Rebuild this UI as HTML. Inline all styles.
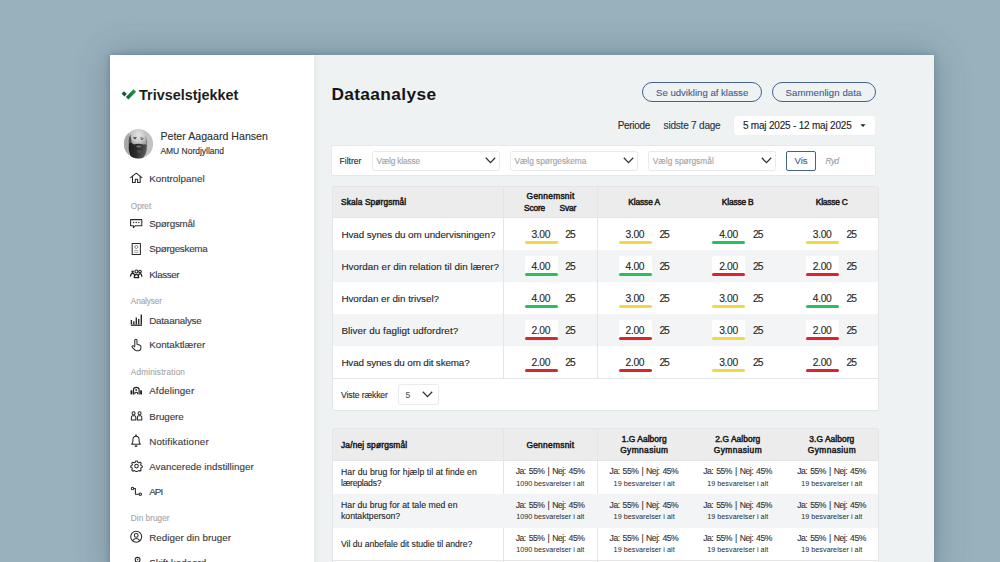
<!DOCTYPE html>
<html><head><meta charset="utf-8"><style>
html,body{margin:0;padding:0;}
body{width:1000px;height:562px;overflow:hidden;position:relative;background:#98b1bd;font-family:"Liberation Sans",sans-serif;}
.t{position:absolute;white-space:nowrap;}
.r{-webkit-text-stroke:0.12px currentColor;}
.sb{-webkit-text-stroke:0.5px currentColor;}
svg{overflow:visible;}
</style></head><body>
<div style="position:absolute;left:110px;top:55px;width:824px;height:520px;background:#eef2f3;box-shadow:0 0 6px rgba(40,60,75,0.25),0 0 34px rgba(40,60,75,0.3);"></div>
<div style="position:absolute;left:110px;top:55px;width:204px;height:520px;background:#ffffff;box-shadow:1px 0 6px rgba(0,0,0,0.06);"></div>
<div style="position:absolute;left:930px;top:55px;width:4px;height:520px;background:#f1f1ee;"></div>
<svg style="position:absolute;left:0;top:0" width="1000" height="562" viewBox="0 0 1000 562"><defs><linearGradient id="lg" x1="0" y1="1" x2="1" y2="0"><stop offset="0" stop-color="#145a36"/><stop offset="1" stop-color="#22a04e"/></linearGradient></defs><path d="M121.6 93.6 L124 91.2 L126.8 94 L124.4 96.4 Z" fill="#16583a"/><path d="M125.9 97.0 L133.5 89.3 L136.1 91.8 L128.4 99.6 Z" fill="url(#lg)"/></svg>
<div class="t" style="left:139.00px;top:87.61px;font-size:14.40px;line-height:14.40px;color:#1e1e1e;font-weight:bold;letter-spacing:0.015px;">Trivselstjekket</div>
<svg style="position:absolute;left:0;top:0" width="1000" height="562" viewBox="0 0 1000 562"><defs><clipPath id="av"><circle cx="138.5" cy="143.9" r="14.6"/></clipPath><filter id="bl" x="-50%" y="-50%" width="200%" height="200%"><feGaussianBlur stdDeviation="0.55"/></filter><radialGradient id="hd" cx="0.5" cy="0.35" r="0.6"><stop offset="0" stop-color="#e4e4e4"/><stop offset="0.7" stop-color="#c9c9c9"/><stop offset="1" stop-color="#a5a5a5"/></radialGradient><linearGradient id="bd" x1="0" y1="0" x2="1" y2="0.3"><stop offset="0" stop-color="#1c1c1c"/><stop offset="0.6" stop-color="#2e2e2e"/><stop offset="1" stop-color="#5a5a5a"/></linearGradient></defs><g clip-path="url(#av)"><rect x="120" y="125" width="40" height="40" fill="#c2c2c2"/><rect x="120" y="125" width="9" height="40" fill="#a8a8a8"/><g filter="url(#bl)"><path d="M131.5 138 Q131 129.5 138.5 129.3 Q145.5 129.5 145.6 137 L146 146 L131 146 Z" fill="url(#hd)"/><path d="M130.3 134 Q131.3 141 132.5 147 L129.6 149 Q127.5 141 130.3 134 Z" fill="#4a4a4a"/><path d="M144.6 135 Q146.6 139 145.8 146 L147 147 Q148 140 144.6 135 Z" fill="#888"/><path d="M133.2 137.6 L136.6 137.4 M140.4 137.8 L143.6 138.4" stroke="#505050" stroke-width="0.9"/><ellipse cx="135" cy="138.6" rx="1" ry="0.55" fill="#333"/><ellipse cx="141.8" cy="139.2" rx="1" ry="0.55" fill="#444"/><path d="M129 143.5 Q131.5 142 134 144.5 Q138.5 143.2 143 144.6 Q145.5 143.5 146.8 145.5 Q147.5 155 141 159.5 Q135 160.5 131.5 158 Q127.8 152 129 143.5 Z" fill="url(#bd)"/><ellipse cx="138.8" cy="146.6" rx="2.6" ry="1" fill="#777"/><ellipse cx="139.5" cy="151.5" rx="2.6" ry="2" fill="#4a4a4a"/></g></g></svg>
<div class="t r" style="left:160.40px;top:131.03px;font-size:10.60px;line-height:10.60px;color:#2f2f2f;letter-spacing:0.017px;">Peter Aagaard Hansen</div>
<div class="t r" style="left:160.40px;top:147.40px;font-size:8.50px;line-height:8.50px;color:#2f2f2f;letter-spacing:-0.014px;">AMU Nordjylland</div>
<div class="t r" style="left:130.80px;top:202.56px;font-size:8.20px;line-height:8.20px;color:#a6a6a6;letter-spacing:-0.025px;">Opret</div>
<div class="t r" style="left:130.80px;top:298.26px;font-size:8.20px;line-height:8.20px;color:#a6a6a6;letter-spacing:-0.085px;">Analyser</div>
<div class="t r" style="left:130.80px;top:369.26px;font-size:8.20px;line-height:8.20px;color:#a6a6a6;letter-spacing:0.173px;">Administration</div>
<div class="t r" style="left:130.80px;top:515.26px;font-size:8.20px;line-height:8.20px;color:#a6a6a6;letter-spacing:0.056px;">Din bruger</div>
<svg style="position:absolute;left:0;top:0" width="1000" height="562" viewBox="0 0 1000 562">
<path d="M130.6 177.6 L136.3 173.2 L141.9 177.6" fill="none" stroke="#2a2a2a" stroke-width="1.05" stroke-linecap="round" stroke-linejoin="round"/>
<path d="M132.5 176.2 V182.4 H135.3 V179.3 H137.6 V182.4 H140.2 V176.2" fill="none" stroke="#2a2a2a" stroke-width="1.05" stroke-linecap="round" stroke-linejoin="round"/>
<path d="M130.6 219.6 H141.8 V225.8 H135.2 L133.4 227.6 V225.8 H130.6 Z" fill="none" stroke="#2a2a2a" stroke-width="1.05" stroke-linecap="round" stroke-linejoin="round"/>
<circle cx="133.6" cy="222.6" r="0.75" fill="#2a2a2a"/><circle cx="136.2" cy="222.6" r="0.75" fill="#2a2a2a"/><circle cx="138.8" cy="222.6" r="0.75" fill="#2a2a2a"/>
<rect x="132.2" y="243.4" width="8.2" height="11.2" fill="none" stroke="#2a2a2a" stroke-width="1.05" stroke-linecap="round" stroke-linejoin="round"/>
<circle cx="136.3" cy="247" r="1.5" fill="none" stroke="#777" stroke-width="0.9"/>
<path d="M134.2 250.6 H138.4 M134.2 252.4 H138.4" fill="none" stroke="#999" stroke-width="0.9"/>
<circle cx="132.6" cy="271.8" r="1.2" fill="#222"/><circle cx="136.4" cy="271.5" r="1.5" fill="none" stroke="#222" stroke-width="1.1"/><circle cx="140" cy="271.6" r="1.3" fill="none" stroke="#222" stroke-width="1.1"/>
<path d="M130.4 276.6 Q130.8 273.4 132.8 273.4 Q134.4 273.4 134.6 275.8 M134.2 277.6 Q134.4 274.4 136.4 274.4 Q138.5 274.4 138.7 277.6 Z M138.4 275.8 Q138.6 273.6 140.2 273.6 Q141.6 273.6 141.9 276.8" fill="none" stroke="#222" stroke-width="1.2" stroke-linejoin="round"/>
<path d="M130.9 325.2 H142" fill="none" stroke="#2a2a2a" stroke-width="1.3"/>
<path d="M131.4 324.4 V320 M133.8 324.4 V321.2 M136.3 324.4 V317.4 M138.7 324.4 V319 M141.3 324.4 V314.4" fill="none" stroke="#2a2a2a" stroke-width="1.4"/>
<path d="M134.8 345.6 V340.6 Q134.8 339.2 135.9 339.2 Q137 339.2 137 340.6 V344.2 L139.6 345 Q141.2 345.6 141 347.4 L140.6 349 Q140.2 350.7 138.6 350.7 H136.6 Q135.6 350.7 134.9 349.9 L132.3 347.4 Q131.6 346.5 132.4 345.9 Q133.2 345.4 134 346.1 L134.8 346.8" fill="none" stroke="#2a2a2a" stroke-width="1.05" stroke-linecap="round" stroke-linejoin="round"/>
<rect x="130.5" y="390.2" width="1.9" height="4.3" rx="0.6" fill="#222"/><rect x="140.1" y="390.2" width="1.9" height="4.3" rx="0.6" fill="#222"/>
<path d="M133.5 394.4 V389.8 Q133.5 387.3 136.3 387.3 Q139.1 387.3 139.1 389.8 V394.4" fill="none" stroke="#222" stroke-width="1.2"/>
<circle cx="136.2" cy="389.9" r="0.9" fill="#222"/><path d="M134.9 394.3 V392.4 H137.5 V394.3" fill="none" stroke="#222" stroke-width="1"/>
<circle cx="133.6" cy="413.3" r="1.5" fill="none" stroke="#2a2a2a" stroke-width="1.05" stroke-linecap="round" stroke-linejoin="round"/><circle cx="139.6" cy="413.3" r="1.5" fill="none" stroke="#2a2a2a" stroke-width="1.05" stroke-linecap="round" stroke-linejoin="round"/>
<path d="M131.4 420 V417.2 Q131.4 415.8 132.8 415.8 H134.4 Q135.8 415.8 135.8 417.2 V420 Z M137.4 420 V417.2 Q137.4 415.8 138.8 415.8 H140.4 Q141.8 415.8 141.8 417.2 V420 Z" fill="none" stroke="#2a2a2a" stroke-width="1.05" stroke-linecap="round" stroke-linejoin="round"/>
<path d="M131.6 444.3 Q132.9 443.4 132.9 441 V439.6 Q132.9 436.3 136 436.3 Q139.1 436.3 139.1 439.6 V441 Q139.1 443.4 140.4 444.3 Z" fill="none" stroke="#2a2a2a" stroke-width="1.05" stroke-linecap="round" stroke-linejoin="round"/>
<path d="M136 434.6 V436.2" fill="none" stroke="#222" stroke-width="1.4"/><path d="M134.8 445.6 Q136 447 137.2 445.6" fill="none" stroke="#222" stroke-width="1.3"/>
<circle cx="136.5" cy="466.1" r="1.8" fill="none" stroke="#2a2a2a" stroke-width="1.05" stroke-linecap="round" stroke-linejoin="round"/>
<path d="M135.7 460.9 H137.3 L137.7 462.2 L138.9 462.8 L140.1 462.1 L141.2 463.2 L140.6 464.4 L141.1 465.5 L142.2 465.9 V467.4 L141.1 467.8 L140.6 468.9 L141.2 470.1 L140.1 471.2 L138.9 470.5 L137.7 471.1 L137.3 471.4 H135.7 L135.3 471.1 L134.1 470.5 L132.9 471.2 L131.8 470.1 L132.4 468.9 L131.9 467.8 L130.8 467.4 V465.9 L131.9 465.5 L132.4 464.4 L131.8 463.2 L132.9 462.1 L134.1 462.8 L135.3 462.2 Z" fill="none" stroke="#2a2a2a" stroke-width="1.05" stroke-linecap="round" stroke-linejoin="round"/>
<circle cx="132.5" cy="488.5" r="1.25" fill="none" stroke="#2a2a2a" stroke-width="1.05" stroke-linecap="round" stroke-linejoin="round"/><circle cx="140.3" cy="494.2" r="1.25" fill="none" stroke="#2a2a2a" stroke-width="1.05" stroke-linecap="round" stroke-linejoin="round"/>
<path d="M133.8 488.5 H135.4 V494.2 H139" fill="none" stroke="#2a2a2a" stroke-width="1.05" stroke-linecap="round" stroke-linejoin="round"/>
<circle cx="136.2" cy="536.8" r="5.5" fill="none" stroke="#2a2a2a" stroke-width="1.05" stroke-linecap="round" stroke-linejoin="round"/><circle cx="136.2" cy="535.4" r="1.9" fill="none" stroke="#2a2a2a" stroke-width="1.05" stroke-linecap="round" stroke-linejoin="round"/>
<path d="M132.6 540.8 Q133.6 538.4 136.2 538.4 Q138.8 538.4 139.8 540.8" fill="none" stroke="#2a2a2a" stroke-width="1.05" stroke-linecap="round" stroke-linejoin="round"/>
<circle cx="137.6" cy="559.8" r="2.4" fill="none" stroke="#2a2a2a" stroke-width="1.05" stroke-linecap="round" stroke-linejoin="round"/><circle cx="137.6" cy="559.8" r="0.7" fill="#222"/>
</svg>
<div class="t r" style="left:149.20px;top:174.00px;font-size:9.80px;line-height:9.80px;color:#3a3a3a;letter-spacing:0.043px;">Kontrolpanel</div>
<div class="t r" style="left:149.20px;top:219.40px;font-size:9.80px;line-height:9.80px;color:#3a3a3a;letter-spacing:-0.198px;">Spørgsmål</div>
<div class="t r" style="left:149.20px;top:244.20px;font-size:9.80px;line-height:9.80px;color:#3a3a3a;letter-spacing:-0.245px;">Spørgeskema</div>
<div class="t r" style="left:149.20px;top:269.50px;font-size:9.80px;line-height:9.80px;color:#3a3a3a;letter-spacing:-0.381px;">Klasser</div>
<div class="t r" style="left:149.20px;top:315.70px;font-size:9.80px;line-height:9.80px;color:#3a3a3a;letter-spacing:-0.189px;">Dataanalyse</div>
<div class="t r" style="left:149.20px;top:340.30px;font-size:9.80px;line-height:9.80px;color:#3a3a3a;letter-spacing:-0.010px;">Kontaktlærer</div>
<div class="t r" style="left:149.20px;top:386.30px;font-size:9.80px;line-height:9.80px;color:#3a3a3a;letter-spacing:0.095px;">Afdelinger</div>
<div class="t r" style="left:149.20px;top:411.60px;font-size:9.80px;line-height:9.80px;color:#3a3a3a;letter-spacing:-0.048px;">Brugere</div>
<div class="t r" style="left:149.20px;top:436.60px;font-size:9.80px;line-height:9.80px;color:#3a3a3a;letter-spacing:0.178px;">Notifikationer</div>
<div class="t r" style="left:149.20px;top:461.90px;font-size:9.80px;line-height:9.80px;color:#3a3a3a;letter-spacing:0.027px;">Avancerede indstillinger</div>
<div class="t r" style="left:149.20px;top:487.00px;font-size:9.80px;line-height:9.80px;color:#3a3a3a;letter-spacing:-0.889px;">API</div>
<div class="t r" style="left:149.20px;top:532.60px;font-size:9.80px;line-height:9.80px;color:#3a3a3a;letter-spacing:0.042px;">Rediger din bruger</div>
<div class="t r" style="left:149.20px;top:558.00px;font-size:9.80px;line-height:9.80px;color:#3a3a3a;letter-spacing:-0.015px;">Skift kodeord</div>
<div class="t" style="left:331.40px;top:85.96px;font-size:17.30px;line-height:17.30px;color:#151515;font-weight:bold;letter-spacing:0.375px;">Dataanalyse</div>
<div style="position:absolute;left:642px;top:82px;width:120px;height:20px;border:1.5px solid #44608e;border-radius:11px;box-sizing:border-box;"></div>
<div style="position:absolute;left:771.5px;top:82px;width:104px;height:20px;border:1.5px solid #44608e;border-radius:11px;box-sizing:border-box;"></div>
<div class="t r" style="left:656.00px;top:87.87px;font-size:9.60px;line-height:9.60px;color:#44608e;letter-spacing:-0.000px;">Se udvikling af klasse</div>
<div class="t r" style="left:785.50px;top:87.87px;font-size:9.60px;line-height:9.60px;color:#44608e;letter-spacing:0.083px;">Sammenlign data</div>
<div class="t r" style="left:617.70px;top:120.84px;font-size:10.00px;line-height:10.00px;color:#2a2a2a;letter-spacing:-0.308px;">Periode</div>
<div class="t r" style="left:663.60px;top:120.84px;font-size:10.00px;line-height:10.00px;color:#2b3445;letter-spacing:-0.200px;">sidste 7 dage</div>
<div style="position:absolute;left:734px;top:115.5px;width:140.5px;height:19.5px;background:#fff;border-radius:2px;box-shadow:0 0 1px rgba(0,0,0,0.08);"></div>
<div class="t r" style="left:742.90px;top:120.84px;font-size:10.00px;line-height:10.00px;color:#222;letter-spacing:-0.200px;">5 maj 2025 - 12 maj 2025</div>
<svg style="position:absolute;left:859.8px;top:123.6px" width="6" height="3.4" viewBox="0 0 6 3.4"><path d="M0.4 0.2 H5.6 L3 3.1 Z" fill="#222"/></svg>
<div style="position:absolute;left:330.7px;top:144.8px;width:545px;height:31.4px;background:#fff;border-radius:2px;border:1px solid #e6e9ea;box-sizing:border-box;"></div>
<div class="t r" style="left:339.60px;top:156.72px;font-size:8.60px;line-height:8.60px;color:#2a2a2a;letter-spacing:-0.029px;">Filtrer</div>
<div style="position:absolute;left:371.6px;top:150.5px;width:128.0px;height:20px;border:1px solid #e8eaeb;border-radius:2.5px;box-sizing:border-box;background:#fff;"></div>
<div class="t r" style="left:376.40px;top:156.97px;font-size:8.30px;line-height:8.30px;color:#a2a2a2;letter-spacing:-0.159px;">Vælg klasse</div>
<svg style="position:absolute;left:485.1px;top:157px" width="11" height="7" viewBox="0 0 11 7"><path d="M0.8 0.8 L5.5 5.6 L10.2 0.8" fill="none" stroke="#333" stroke-width="1.3"/></svg>
<div style="position:absolute;left:509.6px;top:150.5px;width:128.0px;height:20px;border:1px solid #e8eaeb;border-radius:2.5px;box-sizing:border-box;background:#fff;"></div>
<div class="t r" style="left:514.40px;top:156.97px;font-size:8.30px;line-height:8.30px;color:#a2a2a2;letter-spacing:-0.000px;">Vælg spørgeskema</div>
<svg style="position:absolute;left:623.1px;top:157px" width="11" height="7" viewBox="0 0 11 7"><path d="M0.8 0.8 L5.5 5.6 L10.2 0.8" fill="none" stroke="#333" stroke-width="1.3"/></svg>
<div style="position:absolute;left:648px;top:150.5px;width:127.60000000000002px;height:20px;border:1px solid #e8eaeb;border-radius:2.5px;box-sizing:border-box;background:#fff;"></div>
<div class="t r" style="left:652.80px;top:156.97px;font-size:8.30px;line-height:8.30px;color:#a2a2a2;letter-spacing:0.044px;">Vælg spørgsmål</div>
<svg style="position:absolute;left:761.1px;top:157px" width="11" height="7" viewBox="0 0 11 7"><path d="M0.8 0.8 L5.5 5.6 L10.2 0.8" fill="none" stroke="#333" stroke-width="1.3"/></svg>
<div style="position:absolute;left:785.5px;top:151px;width:30.5px;height:19.8px;border:1.3px solid #44608e;border-radius:2px;box-sizing:border-box;"></div>
<div class="t r" style="left:794.60px;top:155.87px;font-size:9.60px;line-height:9.60px;color:#44608e;letter-spacing:-0.126px;">Vis</div>
<div class="t r" style="left:825.60px;top:157.56px;font-size:8.20px;line-height:8.20px;color:#9d9d9d;font-style:italic;letter-spacing:-0.600px;">Ryd</div>
<div style="position:absolute;left:332.4px;top:186.3px;width:546.6px;height:224.7px;background:#fff;border:1px solid #e3e5e6;box-sizing:border-box;border-radius:2px;"></div>
<div style="position:absolute;left:333.4px;top:187.3px;width:544.6px;height:30.3px;background:#ececec;"></div>
<div style="position:absolute;left:333.4px;top:217.3px;width:544.6px;height:1px;background:#e3e5e6;"></div>
<div class="t r" style="left:341.40px;top:229.72px;font-size:9.90px;line-height:9.90px;color:#262626;letter-spacing:-0.097px;">Hvad synes du om undervisningen?</div>
<div style="position:absolute;left:524.6px;top:224.10000000000002px;width:33px;height:20.2px;background:#fff;border-radius:2px;"></div>
<div style="position:absolute;left:524.6px;top:241.4px;width:33px;height:3px;background:#f4d843;border-radius:1.5px;"></div>
<div class="t r" style="left:531.40px;top:229.98px;font-size:10.30px;line-height:10.30px;color:#262626;letter-spacing:-0.345px;">3.00</div>
<div class="t r" style="left:565.20px;top:229.98px;font-size:10.30px;line-height:10.30px;color:#262626;letter-spacing:-1.033px;">25</div>
<div style="position:absolute;left:618.8px;top:224.10000000000002px;width:33px;height:20.2px;background:#fff;border-radius:2px;"></div>
<div style="position:absolute;left:618.8px;top:241.4px;width:33px;height:3px;background:#f4d843;border-radius:1.5px;"></div>
<div class="t r" style="left:625.60px;top:229.98px;font-size:10.30px;line-height:10.30px;color:#262626;letter-spacing:-0.345px;">3.00</div>
<div class="t r" style="left:659.40px;top:229.98px;font-size:10.30px;line-height:10.30px;color:#262626;letter-spacing:-1.033px;">25</div>
<div style="position:absolute;left:712.4px;top:224.10000000000002px;width:33px;height:20.2px;background:#fff;border-radius:2px;"></div>
<div style="position:absolute;left:712.4px;top:241.4px;width:33px;height:3px;background:#22c35c;border-radius:1.5px;"></div>
<div class="t r" style="left:719.20px;top:229.98px;font-size:10.30px;line-height:10.30px;color:#262626;letter-spacing:-0.345px;">4.00</div>
<div class="t r" style="left:753.00px;top:229.98px;font-size:10.30px;line-height:10.30px;color:#262626;letter-spacing:-1.033px;">25</div>
<div style="position:absolute;left:806.0px;top:224.10000000000002px;width:33px;height:20.2px;background:#fff;border-radius:2px;"></div>
<div style="position:absolute;left:806.0px;top:241.4px;width:33px;height:3px;background:#f4d843;border-radius:1.5px;"></div>
<div class="t r" style="left:812.80px;top:229.98px;font-size:10.30px;line-height:10.30px;color:#262626;letter-spacing:-0.345px;">3.00</div>
<div class="t r" style="left:846.60px;top:229.98px;font-size:10.30px;line-height:10.30px;color:#262626;letter-spacing:-1.033px;">25</div>
<div style="position:absolute;left:333.4px;top:250.3px;width:544.6px;height:32px;background:#f2f4f5;"></div>
<div class="t r" style="left:341.40px;top:261.72px;font-size:9.90px;line-height:9.90px;color:#262626;letter-spacing:0.020px;">Hvordan er din relation til din lærer?</div>
<div style="position:absolute;left:524.6px;top:256.1px;width:33px;height:20.2px;background:#fff;border-radius:2px;"></div>
<div style="position:absolute;left:524.6px;top:273.40000000000003px;width:33px;height:3px;background:#22c35c;border-radius:1.5px;"></div>
<div class="t r" style="left:531.40px;top:261.98px;font-size:10.30px;line-height:10.30px;color:#262626;letter-spacing:-0.345px;">4.00</div>
<div class="t r" style="left:565.20px;top:261.98px;font-size:10.30px;line-height:10.30px;color:#262626;letter-spacing:-1.033px;">25</div>
<div style="position:absolute;left:618.8px;top:256.1px;width:33px;height:20.2px;background:#fff;border-radius:2px;"></div>
<div style="position:absolute;left:618.8px;top:273.40000000000003px;width:33px;height:3px;background:#22c35c;border-radius:1.5px;"></div>
<div class="t r" style="left:625.60px;top:261.98px;font-size:10.30px;line-height:10.30px;color:#262626;letter-spacing:-0.345px;">4.00</div>
<div class="t r" style="left:659.40px;top:261.98px;font-size:10.30px;line-height:10.30px;color:#262626;letter-spacing:-1.033px;">25</div>
<div style="position:absolute;left:712.4px;top:256.1px;width:33px;height:20.2px;background:#fff;border-radius:2px;"></div>
<div style="position:absolute;left:712.4px;top:273.40000000000003px;width:33px;height:3px;background:#d8262c;border-radius:1.5px;"></div>
<div class="t r" style="left:719.20px;top:261.98px;font-size:10.30px;line-height:10.30px;color:#262626;letter-spacing:-0.345px;">2.00</div>
<div class="t r" style="left:753.00px;top:261.98px;font-size:10.30px;line-height:10.30px;color:#262626;letter-spacing:-1.033px;">25</div>
<div style="position:absolute;left:806.0px;top:256.1px;width:33px;height:20.2px;background:#fff;border-radius:2px;"></div>
<div style="position:absolute;left:806.0px;top:273.40000000000003px;width:33px;height:3px;background:#d8262c;border-radius:1.5px;"></div>
<div class="t r" style="left:812.80px;top:261.98px;font-size:10.30px;line-height:10.30px;color:#262626;letter-spacing:-0.345px;">2.00</div>
<div class="t r" style="left:846.60px;top:261.98px;font-size:10.30px;line-height:10.30px;color:#262626;letter-spacing:-1.033px;">25</div>
<div class="t r" style="left:341.40px;top:293.72px;font-size:9.90px;line-height:9.90px;color:#262626;letter-spacing:-0.052px;">Hvordan er din trivsel?</div>
<div style="position:absolute;left:524.6px;top:288.1px;width:33px;height:20.2px;background:#fff;border-radius:2px;"></div>
<div style="position:absolute;left:524.6px;top:305.40000000000003px;width:33px;height:3px;background:#22c35c;border-radius:1.5px;"></div>
<div class="t r" style="left:531.40px;top:293.98px;font-size:10.30px;line-height:10.30px;color:#262626;letter-spacing:-0.345px;">4.00</div>
<div class="t r" style="left:565.20px;top:293.98px;font-size:10.30px;line-height:10.30px;color:#262626;letter-spacing:-1.033px;">25</div>
<div style="position:absolute;left:618.8px;top:288.1px;width:33px;height:20.2px;background:#fff;border-radius:2px;"></div>
<div style="position:absolute;left:618.8px;top:305.40000000000003px;width:33px;height:3px;background:#f4d843;border-radius:1.5px;"></div>
<div class="t r" style="left:625.60px;top:293.98px;font-size:10.30px;line-height:10.30px;color:#262626;letter-spacing:-0.345px;">3.00</div>
<div class="t r" style="left:659.40px;top:293.98px;font-size:10.30px;line-height:10.30px;color:#262626;letter-spacing:-1.033px;">25</div>
<div style="position:absolute;left:712.4px;top:288.1px;width:33px;height:20.2px;background:#fff;border-radius:2px;"></div>
<div style="position:absolute;left:712.4px;top:305.40000000000003px;width:33px;height:3px;background:#f4d843;border-radius:1.5px;"></div>
<div class="t r" style="left:719.20px;top:293.98px;font-size:10.30px;line-height:10.30px;color:#262626;letter-spacing:-0.345px;">3.00</div>
<div class="t r" style="left:753.00px;top:293.98px;font-size:10.30px;line-height:10.30px;color:#262626;letter-spacing:-1.033px;">25</div>
<div style="position:absolute;left:806.0px;top:288.1px;width:33px;height:20.2px;background:#fff;border-radius:2px;"></div>
<div style="position:absolute;left:806.0px;top:305.40000000000003px;width:33px;height:3px;background:#22c35c;border-radius:1.5px;"></div>
<div class="t r" style="left:812.80px;top:293.98px;font-size:10.30px;line-height:10.30px;color:#262626;letter-spacing:-0.345px;">4.00</div>
<div class="t r" style="left:846.60px;top:293.98px;font-size:10.30px;line-height:10.30px;color:#262626;letter-spacing:-1.033px;">25</div>
<div style="position:absolute;left:333.4px;top:314.3px;width:544.6px;height:32px;background:#f2f4f5;"></div>
<div class="t r" style="left:341.40px;top:325.72px;font-size:9.90px;line-height:9.90px;color:#262626;letter-spacing:0.056px;">Bliver du fagligt udfordret?</div>
<div style="position:absolute;left:524.6px;top:320.1px;width:33px;height:20.2px;background:#fff;border-radius:2px;"></div>
<div style="position:absolute;left:524.6px;top:337.40000000000003px;width:33px;height:3px;background:#d8262c;border-radius:1.5px;"></div>
<div class="t r" style="left:531.40px;top:325.98px;font-size:10.30px;line-height:10.30px;color:#262626;letter-spacing:-0.345px;">2.00</div>
<div class="t r" style="left:565.20px;top:325.98px;font-size:10.30px;line-height:10.30px;color:#262626;letter-spacing:-1.033px;">25</div>
<div style="position:absolute;left:618.8px;top:320.1px;width:33px;height:20.2px;background:#fff;border-radius:2px;"></div>
<div style="position:absolute;left:618.8px;top:337.40000000000003px;width:33px;height:3px;background:#d8262c;border-radius:1.5px;"></div>
<div class="t r" style="left:625.60px;top:325.98px;font-size:10.30px;line-height:10.30px;color:#262626;letter-spacing:-0.345px;">2.00</div>
<div class="t r" style="left:659.40px;top:325.98px;font-size:10.30px;line-height:10.30px;color:#262626;letter-spacing:-1.033px;">25</div>
<div style="position:absolute;left:712.4px;top:320.1px;width:33px;height:20.2px;background:#fff;border-radius:2px;"></div>
<div style="position:absolute;left:712.4px;top:337.40000000000003px;width:33px;height:3px;background:#f4d843;border-radius:1.5px;"></div>
<div class="t r" style="left:719.20px;top:325.98px;font-size:10.30px;line-height:10.30px;color:#262626;letter-spacing:-0.345px;">3.00</div>
<div class="t r" style="left:753.00px;top:325.98px;font-size:10.30px;line-height:10.30px;color:#262626;letter-spacing:-1.033px;">25</div>
<div style="position:absolute;left:806.0px;top:320.1px;width:33px;height:20.2px;background:#fff;border-radius:2px;"></div>
<div style="position:absolute;left:806.0px;top:337.40000000000003px;width:33px;height:3px;background:#d8262c;border-radius:1.5px;"></div>
<div class="t r" style="left:812.80px;top:325.98px;font-size:10.30px;line-height:10.30px;color:#262626;letter-spacing:-0.345px;">2.00</div>
<div class="t r" style="left:846.60px;top:325.98px;font-size:10.30px;line-height:10.30px;color:#262626;letter-spacing:-1.033px;">25</div>
<div class="t r" style="left:341.40px;top:357.72px;font-size:9.90px;line-height:9.90px;color:#262626;letter-spacing:-0.154px;">Hvad synes du om dit skema?</div>
<div style="position:absolute;left:524.6px;top:352.1px;width:33px;height:20.2px;background:#fff;border-radius:2px;"></div>
<div style="position:absolute;left:524.6px;top:369.40000000000003px;width:33px;height:3px;background:#d8262c;border-radius:1.5px;"></div>
<div class="t r" style="left:531.40px;top:357.98px;font-size:10.30px;line-height:10.30px;color:#262626;letter-spacing:-0.345px;">2.00</div>
<div class="t r" style="left:565.20px;top:357.98px;font-size:10.30px;line-height:10.30px;color:#262626;letter-spacing:-1.033px;">25</div>
<div style="position:absolute;left:618.8px;top:352.1px;width:33px;height:20.2px;background:#fff;border-radius:2px;"></div>
<div style="position:absolute;left:618.8px;top:369.40000000000003px;width:33px;height:3px;background:#d8262c;border-radius:1.5px;"></div>
<div class="t r" style="left:625.60px;top:357.98px;font-size:10.30px;line-height:10.30px;color:#262626;letter-spacing:-0.345px;">2.00</div>
<div class="t r" style="left:659.40px;top:357.98px;font-size:10.30px;line-height:10.30px;color:#262626;letter-spacing:-1.033px;">25</div>
<div style="position:absolute;left:712.4px;top:352.1px;width:33px;height:20.2px;background:#fff;border-radius:2px;"></div>
<div style="position:absolute;left:712.4px;top:369.40000000000003px;width:33px;height:3px;background:#f4d843;border-radius:1.5px;"></div>
<div class="t r" style="left:719.20px;top:357.98px;font-size:10.30px;line-height:10.30px;color:#262626;letter-spacing:-0.345px;">3.00</div>
<div class="t r" style="left:753.00px;top:357.98px;font-size:10.30px;line-height:10.30px;color:#262626;letter-spacing:-1.033px;">25</div>
<div style="position:absolute;left:806.0px;top:352.1px;width:33px;height:20.2px;background:#fff;border-radius:2px;"></div>
<div style="position:absolute;left:806.0px;top:369.40000000000003px;width:33px;height:3px;background:#d8262c;border-radius:1.5px;"></div>
<div class="t r" style="left:812.80px;top:357.98px;font-size:10.30px;line-height:10.30px;color:#262626;letter-spacing:-0.345px;">2.00</div>
<div class="t r" style="left:846.60px;top:357.98px;font-size:10.30px;line-height:10.30px;color:#262626;letter-spacing:-1.033px;">25</div>
<div style="position:absolute;left:503.2px;top:187.3px;width:1px;height:191.0px;background:#e3e5e6;"></div>
<div style="position:absolute;left:597.4px;top:187.3px;width:1px;height:191.0px;background:#e3e5e6;"></div>
<div style="position:absolute;left:333.4px;top:377.8px;width:544.6px;height:1px;background:#e3e5e6;"></div>
<div class="t sb" style="left:341.00px;top:198.29px;font-size:8.40px;line-height:8.40px;color:#1e1e1e;letter-spacing:0.102px;">Skala Spørgsmål</div>
<div class="t sb" style="left:526.60px;top:192.29px;font-size:8.40px;line-height:8.40px;color:#1e1e1e;letter-spacing:0.280px;">Gennemsnit</div>
<div class="t sb" style="left:524.00px;top:203.89px;font-size:8.40px;line-height:8.40px;color:#1e1e1e;letter-spacing:-0.181px;">Score</div>
<div class="t sb" style="left:559.60px;top:203.89px;font-size:8.40px;line-height:8.40px;color:#1e1e1e;letter-spacing:-0.154px;">Svar</div>
<div class="t sb" style="left:628.20px;top:197.89px;font-size:8.40px;line-height:8.40px;color:#1e1e1e;letter-spacing:-0.103px;">Klasse A</div>
<div class="t sb" style="left:721.80px;top:197.89px;font-size:8.40px;line-height:8.40px;color:#1e1e1e;letter-spacing:-0.163px;">Klasse B</div>
<div class="t sb" style="left:815.80px;top:197.89px;font-size:8.40px;line-height:8.40px;color:#1e1e1e;letter-spacing:-0.229px;">Klasse C</div>
<div class="t r" style="left:341.00px;top:390.72px;font-size:8.60px;line-height:8.60px;color:#2a2a2a;letter-spacing:-0.111px;">Viste rækker</div>
<div style="position:absolute;left:398.2px;top:384.4px;width:41.3px;height:20.2px;border:1px solid #e8eaeb;border-radius:2.5px;box-sizing:border-box;background:#fff;"></div>
<div class="t r" style="left:405.60px;top:390.72px;font-size:8.60px;line-height:8.60px;color:#555;">5</div>
<svg style="position:absolute;left:421.5px;top:390.5px" width="11" height="7" viewBox="0 0 11 7"><path d="M0.8 0.8 L5.5 5.6 L10.2 0.8" fill="none" stroke="#333" stroke-width="1.3"/></svg>
<div style="position:absolute;left:332.4px;top:428px;width:546.6px;height:150px;background:#fff;border:1px solid #e3e5e6;box-sizing:border-box;border-radius:2px;"></div>
<div style="position:absolute;left:333.4px;top:429px;width:544.6px;height:31.3px;background:#ececec;"></div>
<div style="position:absolute;left:333.4px;top:460.3px;width:544.6px;height:1px;background:#e3e5e6;"></div>
<div style="position:absolute;left:503.2px;top:429px;width:1px;height:140px;background:#e3e5e6;"></div>
<div style="position:absolute;left:597.4px;top:429px;width:1px;height:140px;background:#e3e5e6;"></div>
<div class="t sb" style="left:341.00px;top:440.69px;font-size:8.40px;line-height:8.40px;color:#1e1e1e;letter-spacing:0.156px;">Ja/nej spørgsmål</div>
<div class="t sb" style="left:526.40px;top:440.69px;font-size:8.40px;line-height:8.40px;color:#1e1e1e;letter-spacing:0.280px;">Gennemsnit</div>
<div class="t sb" style="left:621.70px;top:434.99px;font-size:8.40px;line-height:8.40px;color:#1e1e1e;letter-spacing:0.065px;">1.G Aalborg</div>
<div class="t sb" style="left:620.20px;top:446.39px;font-size:8.40px;line-height:8.40px;color:#1e1e1e;letter-spacing:0.398px;">Gymnasium</div>
<div class="t sb" style="left:715.30px;top:434.99px;font-size:8.40px;line-height:8.40px;color:#1e1e1e;letter-spacing:0.065px;">2.G Aalborg</div>
<div class="t sb" style="left:713.80px;top:446.39px;font-size:8.40px;line-height:8.40px;color:#1e1e1e;letter-spacing:0.398px;">Gymnasium</div>
<div class="t sb" style="left:809.30px;top:434.99px;font-size:8.40px;line-height:8.40px;color:#1e1e1e;letter-spacing:0.065px;">3.G Aalborg</div>
<div class="t sb" style="left:807.80px;top:446.39px;font-size:8.40px;line-height:8.40px;color:#1e1e1e;letter-spacing:0.398px;">Gymnasium</div>
<div class="t r" style="left:341.00px;top:467.84px;font-size:8.70px;line-height:8.70px;color:#262626;letter-spacing:0.056px;">Har du brug for hjælp til at finde en</div>
<div class="t r" style="left:341.00px;top:478.64px;font-size:8.70px;line-height:8.70px;color:#262626;letter-spacing:-0.269px;">læreplads?</div>
<div class="t r" style="left:515.70px;top:467.32px;font-size:8.60px;line-height:8.60px;color:#333;letter-spacing:-0.457px;word-spacing:1.00px;">Ja: 55% | Nej: 45%</div>
<div class="t" style="left:516.20px;top:479.51px;font-size:7.20px;line-height:7.20px;color:#2a2a2a;letter-spacing:-0.011px;">1090 besvarelser i alt</div>
<div class="t r" style="left:609.60px;top:467.32px;font-size:8.60px;line-height:8.60px;color:#333;letter-spacing:-0.457px;word-spacing:1.00px;">Ja: 55% | Nej: 45%</div>
<div class="t" style="left:613.60px;top:479.51px;font-size:7.20px;line-height:7.20px;color:#2a2a2a;letter-spacing:0.040px;">19 besvarelser i alt</div>
<div class="t r" style="left:703.20px;top:467.32px;font-size:8.60px;line-height:8.60px;color:#333;letter-spacing:-0.457px;word-spacing:1.00px;">Ja: 55% | Nej: 45%</div>
<div class="t" style="left:707.20px;top:479.51px;font-size:7.20px;line-height:7.20px;color:#2a2a2a;letter-spacing:0.040px;">19 besvarelser i alt</div>
<div class="t r" style="left:797.20px;top:467.32px;font-size:8.60px;line-height:8.60px;color:#333;letter-spacing:-0.457px;word-spacing:1.00px;">Ja: 55% | Nej: 45%</div>
<div class="t" style="left:801.20px;top:479.51px;font-size:7.20px;line-height:7.20px;color:#2a2a2a;letter-spacing:0.040px;">19 besvarelser i alt</div>
<div style="position:absolute;left:333.4px;top:494.4px;width:544.6px;height:33.4px;background:#f2f4f5;"></div>
<div class="t r" style="left:341.00px;top:501.24px;font-size:8.70px;line-height:8.70px;color:#262626;letter-spacing:0.022px;">Har du brug for at tale med en</div>
<div class="t r" style="left:341.00px;top:512.04px;font-size:8.70px;line-height:8.70px;color:#262626;letter-spacing:-0.024px;">kontaktperson?</div>
<div class="t r" style="left:515.70px;top:500.72px;font-size:8.60px;line-height:8.60px;color:#333;letter-spacing:-0.457px;word-spacing:1.00px;">Ja: 55% | Nej: 45%</div>
<div class="t" style="left:516.20px;top:512.91px;font-size:7.20px;line-height:7.20px;color:#2a2a2a;letter-spacing:-0.011px;">1090 besvarelser i alt</div>
<div class="t r" style="left:609.60px;top:500.72px;font-size:8.60px;line-height:8.60px;color:#333;letter-spacing:-0.457px;word-spacing:1.00px;">Ja: 55% | Nej: 45%</div>
<div class="t" style="left:613.60px;top:512.91px;font-size:7.20px;line-height:7.20px;color:#2a2a2a;letter-spacing:0.040px;">19 besvarelser i alt</div>
<div class="t r" style="left:703.20px;top:500.72px;font-size:8.60px;line-height:8.60px;color:#333;letter-spacing:-0.457px;word-spacing:1.00px;">Ja: 55% | Nej: 45%</div>
<div class="t" style="left:707.20px;top:512.91px;font-size:7.20px;line-height:7.20px;color:#2a2a2a;letter-spacing:0.040px;">19 besvarelser i alt</div>
<div class="t r" style="left:797.20px;top:500.72px;font-size:8.60px;line-height:8.60px;color:#333;letter-spacing:-0.457px;word-spacing:1.00px;">Ja: 55% | Nej: 45%</div>
<div class="t" style="left:801.20px;top:512.91px;font-size:7.20px;line-height:7.20px;color:#2a2a2a;letter-spacing:0.040px;">19 besvarelser i alt</div>
<div class="t r" style="left:341.00px;top:539.94px;font-size:8.70px;line-height:8.70px;color:#262626;letter-spacing:-0.037px;">Vil du anbefale dit studie til andre?</div>
<div class="t r" style="left:515.70px;top:534.12px;font-size:8.60px;line-height:8.60px;color:#333;letter-spacing:-0.457px;word-spacing:1.00px;">Ja: 55% | Nej: 45%</div>
<div class="t" style="left:516.20px;top:546.31px;font-size:7.20px;line-height:7.20px;color:#2a2a2a;letter-spacing:-0.011px;">1090 besvarelser i alt</div>
<div class="t r" style="left:609.60px;top:534.12px;font-size:8.60px;line-height:8.60px;color:#333;letter-spacing:-0.457px;word-spacing:1.00px;">Ja: 55% | Nej: 45%</div>
<div class="t" style="left:613.60px;top:546.31px;font-size:7.20px;line-height:7.20px;color:#2a2a2a;letter-spacing:0.040px;">19 besvarelser i alt</div>
<div class="t r" style="left:703.20px;top:534.12px;font-size:8.60px;line-height:8.60px;color:#333;letter-spacing:-0.457px;word-spacing:1.00px;">Ja: 55% | Nej: 45%</div>
<div class="t" style="left:707.20px;top:546.31px;font-size:7.20px;line-height:7.20px;color:#2a2a2a;letter-spacing:0.040px;">19 besvarelser i alt</div>
<div class="t r" style="left:797.20px;top:534.12px;font-size:8.60px;line-height:8.60px;color:#333;letter-spacing:-0.457px;word-spacing:1.00px;">Ja: 55% | Nej: 45%</div>
<div class="t" style="left:801.20px;top:546.31px;font-size:7.20px;line-height:7.20px;color:#2a2a2a;letter-spacing:0.040px;">19 besvarelser i alt</div>
<div style="position:absolute;left:333.4px;top:560.3px;width:544.6px;height:1px;background:#e3e5e6;"></div>
</body></html>
